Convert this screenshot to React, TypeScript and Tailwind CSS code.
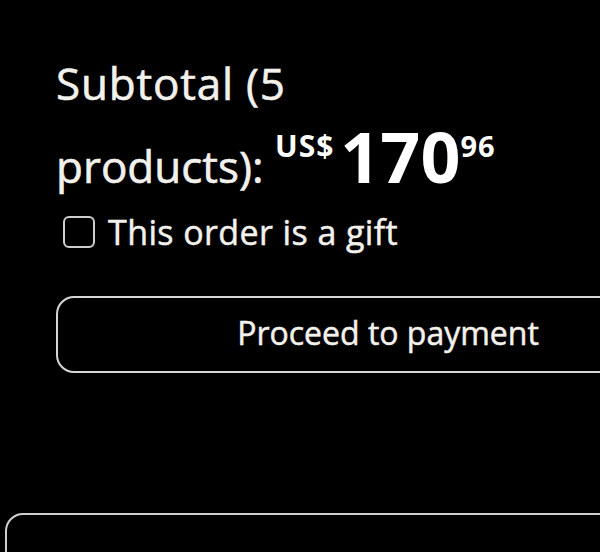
import React from "react";

export default function App() {
  return (
    <div className="w-[600px] h-[552px] overflow-hidden bg-black font-['Open_Sans',sans-serif] text-[#f3f1ec]">
      <div className="w-[664px] ml-[56px] pt-[57px]">
        <div className="text-[44px] leading-[52px] [-webkit-text-stroke:0.6px_#f3f1ec] whitespace-nowrap">
          <span className="tracking-[0.8px]">Subtotal (5</span>
          <br />
          products):{" "}
          <span className="text-white font-bold [-webkit-text-stroke:0px]">
            <span className="text-[30px] leading-none tracking-[1px] align-[26px]">US$</span>
            <span className="ml-[6px] text-[70px] leading-[94px]">170</span>
            <span className="text-[29px] leading-none tracking-[1px] align-[26px]">96</span>
          </span>
        </div>
        <div className="mt-[12px] h-[34px] flex items-center">
          <span className="ml-[7px] w-[32px] h-[32px] rounded-[6px] border-2 border-[#cfcfcf] shrink-0" />
          <span className="ml-[13px] text-[34px] leading-[34px] tracking-[0.4px] [-webkit-text-stroke:0.5px_#f3f1ec] whitespace-nowrap">This order is a gift</span>
        </div>
        <div className="mt-[47px] w-[664px] h-[77px] rounded-[18px] border-2 border-[#d6d6d6] flex items-center justify-center pb-[3px]">
          <span className="text-[32px] leading-[32px] [-webkit-text-stroke:0.5px_#f3f1ec] whitespace-nowrap">Proceed to payment</span>
        </div>
      </div>
      <div className="ml-[5px] mt-[140px] w-[800px] h-[200px] rounded-[18px] border-2 border-[#cfcfcf]" />
    </div>
  );
}
